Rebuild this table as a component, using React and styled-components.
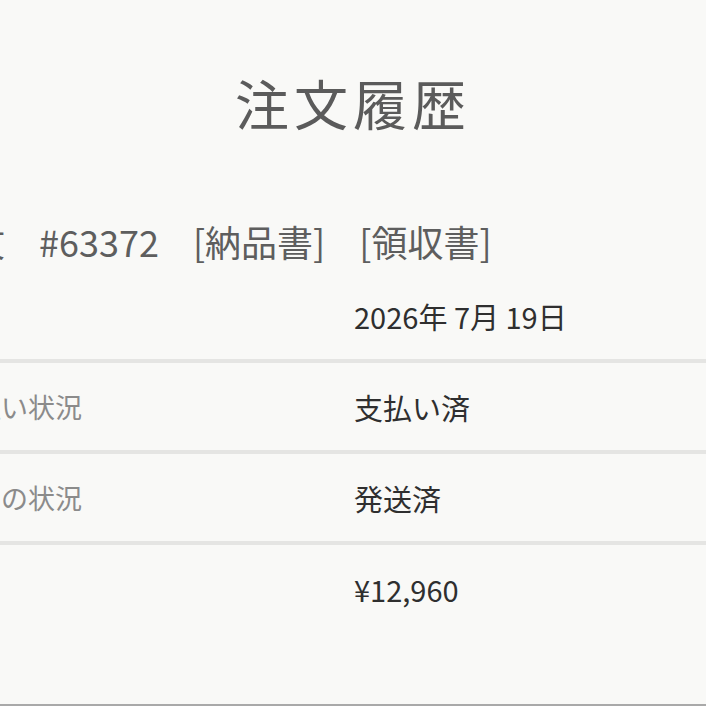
import React from 'react';
import styled, { createGlobalStyle } from 'styled-components';

const GlobalStyle = createGlobalStyle`
  html, body {
    margin: 0;
    padding: 0;
    background: #f9f9f7;
  }
  body {
    font-family: 'Noto Sans CJK JP', 'Noto Sans', sans-serif;
  }
`;

const Page = styled.div`
  width: 706px;
  height: 706px;
  box-sizing: border-box;
  overflow: hidden;
  background: #f9f9f7;
  border-bottom: 2px solid #a9a9a9;
  padding-top: 76px;
`;

const Title = styled.h1`
  margin: 0;
  font-size: 54px;
  line-height: 1;
  font-weight: 400;
  letter-spacing: 5px;
  text-align: center;
  color: #5b5b5b;
`;

const Detail = styled.div`
  margin-left: -80px;
  margin-top: 93px;
`;

const OrderHead = styled.div`
  display: flex;
  align-items: center;
  gap: 34px;
  margin-left: -23px;
  font-size: 36px;
  line-height: 1;
  color: #5e5e5e;
`;

const Table = styled.div`
  margin-top: 13px;
`;

const Row = styled.div`
  display: grid;
  grid-template-columns: 434px 1fr;
  align-items: center;
  height: 87px;
  border-bottom: ${(p) => (p.$last ? 'none' : '4px solid #e5e5e3')};
`;

const Label = styled.div`
  font-size: 27px;
  color: #8b8b8b;
`;

const Value = styled.div`
  font-size: 29px;
  color: #2f2f2f;
  white-space: pre;
`;

const rows = [
  { label: '日付', value: '2026年 7月 19日' },
  { label: 'お支払い状況', value: '支払い済' },
  { label: 'お届けの状況', value: '発送済' },
  { label: '合計', value: '¥12,960' },
];

export default function App() {
  return (
    <>
      <GlobalStyle />
      <Page>
        <Title>注文履歴</Title>
        <Detail>
          <OrderHead>
            <span>ご注文</span>
            <span>#63372</span>
            <span>[納品書]</span>
            <span>[領収書]</span>
          </OrderHead>
          <Table>
            {rows.map((r, i) => (
              <Row key={r.label} $last={i === rows.length - 1}>
                <Label>{r.label}</Label>
                <Value>{r.value}</Value>
              </Row>
            ))}
          </Table>
        </Detail>
      </Page>
    </>
  );
}
